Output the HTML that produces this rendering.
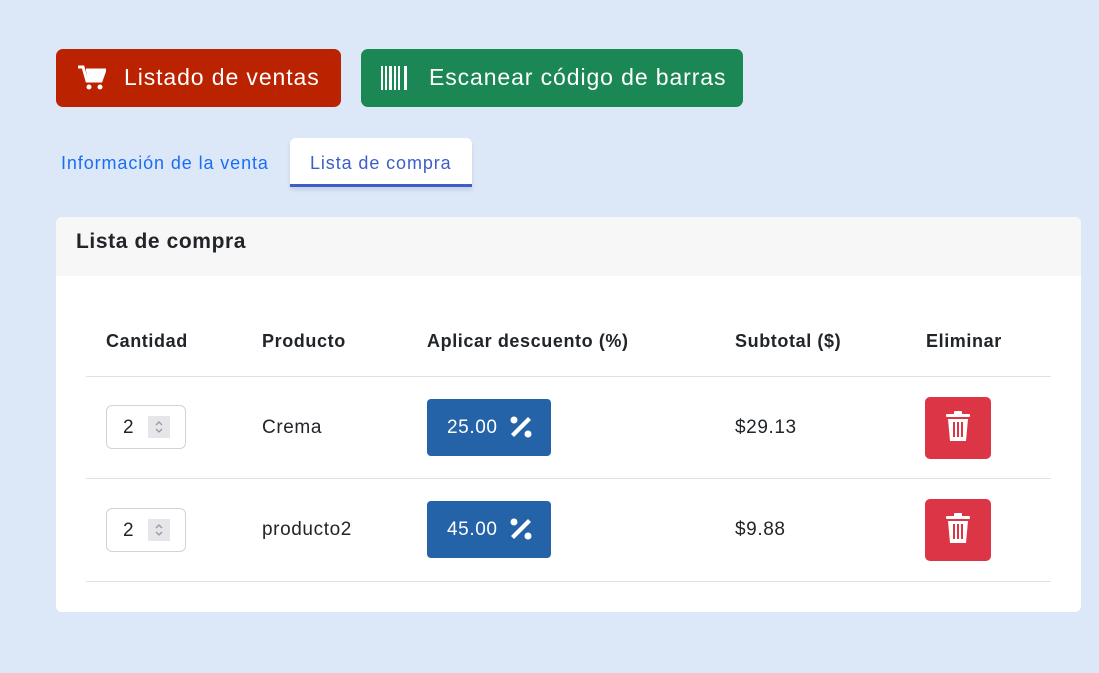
<!DOCTYPE html>
<html><head><meta charset="utf-8"><style>
*{box-sizing:border-box;margin:0;padding:0}
body{width:1099px;height:673px;background:#dce8f8;font-family:"Liberation Sans",sans-serif;position:relative;overflow:hidden;color:#212529;letter-spacing:0.6px}
.a{position:absolute}
.btn{position:absolute;border-radius:7px;color:#fff;font-size:23px;display:flex;align-items:center;letter-spacing:0.9px}
.th{position:absolute;top:331px;font-weight:bold;font-size:18px}
.td{position:absolute;font-size:19px}
.line{position:absolute;left:86px;width:965px;height:1px;background:#dee2e6}
.num{position:absolute;left:106px;width:80px;height:44px;border:1px solid #ced4da;border-radius:6px;background:#fff}
.num span{position:absolute;left:16px;top:11px;font-size:19px}
.num i{position:absolute;left:41px;top:10px;width:22px;height:22px;background:#e5e5ea}
.pct{position:absolute;left:427px;width:124px;height:57px;background:#2563a8;border-radius:4px;color:#fff;font-size:19px}
.del{position:absolute;left:925px;width:66px;height:62px;background:#dc3545;border-radius:5px}
</style></head><body>
<div class="btn" style="left:56px;top:49px;width:285px;height:58px;background:#bb2200">
<svg class="a" style="left:22px;top:16px" width="28" height="26" viewBox="0 0 28 26"><path d="M0 2h5l4 14h14l4-11H8" fill="none" stroke="#fff" stroke-width="3"/><path d="M8 5h19l-4 11H10z" fill="#fff"/><circle cx="11" cy="22" r="2.5" fill="#fff"/><circle cx="22" cy="22" r="2.5" fill="#fff"/></svg>
<span class="a" style="left:68px;top:15px">Listado de ventas</span></div>
<div class="btn" style="left:361px;top:49px;width:382px;height:58px;background:#1a8754">
<svg class="a" style="left:20px;top:17px" width="28" height="24" viewBox="0 0 28 24" fill="#fff"><rect x="0" y="0" width="2" height="24"/><rect x="4" y="0" width="2" height="24"/><rect x="8" y="0" width="3" height="24"/><rect x="13" y="0" width="2" height="24"/><rect x="17" y="0" width="2" height="24"/><rect x="23" y="0" width="3" height="24"/></svg>
<span class="a" style="left:68px;top:15px">Escanear código de barras</span></div>
<div class="a" style="left:61px;top:153px;font-size:18px;color:#1a6ef5;letter-spacing:0.9px">Información de la venta</div>
<div class="a" style="left:290px;top:138px;width:182px;height:49px;background:#fff;border-radius:6px 6px 0 0;border-bottom:3px solid #3d5ec8;box-shadow:0 3px 4px rgba(0,0,0,.1)"></div>
<div class="a" style="left:310px;top:153px;font-size:18px;color:#3d5ec8;letter-spacing:0.9px">Lista de compra</div>
<div class="a" style="left:56px;top:217px;width:1025px;height:395px;background:#fff;border-radius:6px;overflow:hidden">
<div style="height:59px;background:#f7f7f7;padding:13px 20px;font-weight:bold;font-size:21px">Lista de compra</div></div>
<div class="th" style="left:106px">Cantidad</div>
<div class="th" style="left:262px">Producto</div>
<div class="th" style="left:427px">Aplicar descuento (%)</div>
<div class="th" style="left:735px">Subtotal ($)</div>
<div class="th" style="left:926px">Eliminar</div>
<div class="line" style="top:376px"></div>
<div class="line" style="top:478px"></div>
<div class="line" style="top:581px"></div>
<div class="num" style="top:405px"><span>2</span><i></i><svg class="a" style="left:47px;top:13px" width="10" height="16" viewBox="0 0 10 16" fill="none" stroke="#999" stroke-width="1.3"><path d="M2 6l3-3 3 3M2 10l3 3 3-3"/></svg></div>
<div class="num" style="top:508px"><span>2</span><i></i><svg class="a" style="left:47px;top:13px" width="10" height="16" viewBox="0 0 10 16" fill="none" stroke="#999" stroke-width="1.3"><path d="M2 6l3-3 3 3M2 10l3 3 3-3"/></svg></div>
<div class="td" style="left:262px;top:417px">Crema</div>
<div class="td" style="left:262px;top:519px">producto2</div>
<div class="td" style="left:735px;top:417px">$29.13</div>
<div class="td" style="left:735px;top:519px">$9.88</div>
<div class="pct" style="top:399px"><span class="a" style="left:20px;top:18px">25.00</span><svg class="a" style="left:82px;top:16px" width="24" height="24" viewBox="0 0 24 24" fill="#fff"><circle cx="5" cy="5" r="3.5"/><circle cx="19" cy="19" r="3.5"/><path d="M19 2l3 3L5 22l-3-3z"/></svg></div>
<div class="pct" style="top:501px"><span class="a" style="left:20px;top:18px">45.00</span><svg class="a" style="left:82px;top:16px" width="24" height="24" viewBox="0 0 24 24" fill="#fff"><circle cx="5" cy="5" r="3.5"/><circle cx="19" cy="19" r="3.5"/><path d="M19 2l3 3L5 22l-3-3z"/></svg></div>
<div class="del" style="top:397px"><svg class="a" style="left:21px;top:14px" width="24" height="30" viewBox="0 0 24 30" fill="#fff"><rect x="0" y="3" width="24" height="3" rx="1"/><rect x="8" y="0" width="8" height="4" rx="1"/><path d="M2 8h20l-2 22H4z"/><rect x="7" y="11" width="2" height="15" fill="#dc3545"/><rect x="11" y="11" width="2" height="15" fill="#dc3545"/><rect x="15" y="11" width="2" height="15" fill="#dc3545"/></svg></div>
<div class="del" style="top:499px"><svg class="a" style="left:21px;top:14px" width="24" height="30" viewBox="0 0 24 30" fill="#fff"><rect x="0" y="3" width="24" height="3" rx="1"/><rect x="8" y="0" width="8" height="4" rx="1"/><path d="M2 8h20l-2 22H4z"/><rect x="7" y="11" width="2" height="15" fill="#dc3545"/><rect x="11" y="11" width="2" height="15" fill="#dc3545"/><rect x="15" y="11" width="2" height="15" fill="#dc3545"/></svg></div>
</body></html>
